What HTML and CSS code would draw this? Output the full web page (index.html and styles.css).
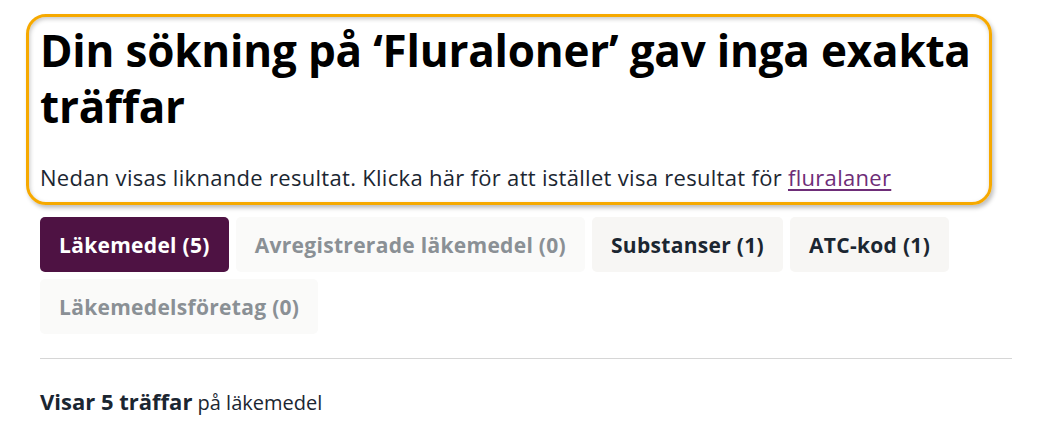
FILE: index.html
```html
<!DOCTYPE html>
<html>
	<head>
		<meta charset="utf-8">
		<title>Sökresultat</title>
		<link rel="stylesheet" href="styles.css">
	</head>
	<body>
		<div class="page">
			<div class="notice">
				<h1>Din sökning på ‘Fluraloner’ gav inga exakta träffar</h1>
				<p>Nedan visas liknande resultat. Klicka här för att istället visa resultat för <a href="#">fluralaner</a></p>
			</div>

			<ul class="tabs">
				<li class="tab active">Läkemedel (5)</li>
				<li class="tab disabled">Avregistrerade läkemedel (0)</li>
				<li class="tab">Substanser (1)</li>
				<li class="tab">ATC-kod (1)</li>
				<li class="tab disabled">Läkemedelsföretag (0)</li>
			</ul>

			<hr class="divider">

			<p class="count"><b>Visar 5 träffar</b> på läkemedel</p>
		</div>
	</body>
</html>
```

FILE: styles.css
```css
html,body,ul,li,h1,p {margin: 0px;padding: 0px;}
body {font-family: "Open Sans", "Noto Sans", sans-serif;color: #1b2631;background: #fff;}
.page {padding: 14px 48px 0 40px;}

/* sökrutan med gul ram */
.notice {
	margin-left: -14px;
	width: 966px;
	box-sizing: border-box;
	border: 3px solid #f6a900;
	border-radius: 20px;
	padding: 5px 11px 11px 11px;
	box-shadow: inset 1px 2px 4px rgba(0,0,0,0.22), 2px 3px 4px rgba(0,0,0,0.25);
}
.notice h1 {font-size: 44px;line-height: 56px;font-weight: 700;color: #000;letter-spacing: -0.2px;}
.notice p {font-size: 22px;line-height: 28px;margin-top: 29px;letter-spacing: 0.3px;}
.notice a {color: #6e2d78;text-decoration: underline;text-underline-offset: 3px;}

/* flikar */
.tabs {display: flex;flex-wrap: wrap;gap: 7px 7px;margin-top: 12px;list-style: none;}
.tab {
	height: 55px;
	padding: 0 19px;
	display: flex;
	align-items: center;
	font-size: 21px;
	font-weight: 700;
	letter-spacing: 0.3px;
	background: #f7f6f4;
	color: #1b2631;
	border-radius: 5px;
	cursor: pointer;
}
.tab.active {background: #4e1243;color: #fff;}
.tab.disabled {color: #8a9095;background: #fafaf9;}

.divider {border: none;border-top: 1px solid #d6d6d6;margin: 24px 0 0 0;}

.count {margin-top: 28px;font-size: 20px;line-height: 28px;}
.count b {font-size: 22px;font-weight: 700;}
```
